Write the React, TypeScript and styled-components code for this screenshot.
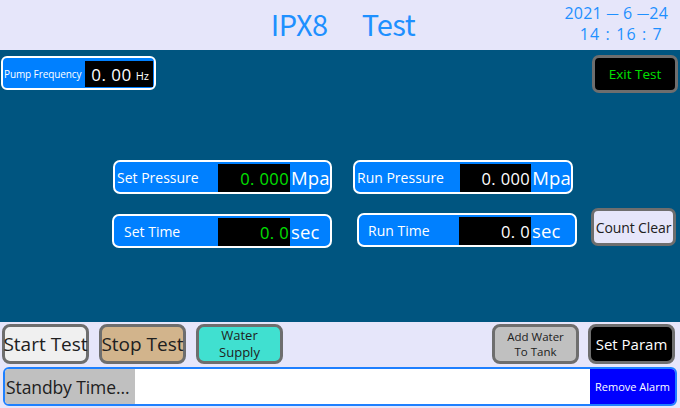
import React from "react";
import styled, { createGlobalStyle } from "styled-components";

const Global = createGlobalStyle`
  html, body { margin: 0; padding: 0; }
  body { width: 680px; height: 408px; overflow: hidden; font-family: "Open Sans", "Noto Sans", sans-serif; }
  * { box-sizing: border-box; }
`;

const Screen = styled.div`
  width: 680px;
  height: 408px;
  display: flex;
  flex-direction: column;
  background: #e6e6fa;
`;

const Header = styled.div`
  height: 50px;
  display: flex;
  align-items: center;
  position: relative;
  background: #e6e6fa;
`;

const Title = styled.div`
  flex: 1;
  display: flex;
  justify-content: center;
  gap: 34px;
  padding-left: 6px;
  color: #1e90ff;
  font-family: "Noto Sans CJK TC", "Open Sans", sans-serif;
  font-size: 29px;
  line-height: 34px;
  letter-spacing: -0.4px;
  margin-top: -5px;
`;

const Clock = styled.div`
  position: absolute;
  right: 12px;
  top: 3px;
  display: flex;
  flex-direction: column;
  align-items: flex-end;
  color: #1e90ff;
  font-size: 16px;
  line-height: 20px;
`;

const ClockLine = styled.span<{ $ls: number }>`
  letter-spacing: ${(p) => p.$ls}px;
  white-space: pre;
`;

const Dash = styled.span`
  font-size: 12.5px;
  letter-spacing: 0;
  vertical-align: 1px;
`;

const Panel = styled.div`
  height: 272px;
  background: #005580;
  display: flex;
  flex-direction: column;
`;

const TopRow = styled.div`
  display: flex;
  justify-content: space-between;
  align-items: flex-start;
  padding: 5px 2px 0 1px;
  height: 43px;
`;

const PumpBox = styled.div`
  margin-top: 1px;
  width: 155px;
  height: 34px;
  border: 2px solid #ffffff;
  border-radius: 6px;
  background: #0080ff;
  display: flex;
  align-items: center;
  padding: 3px 1px 1px 1px;
`;

const PumpLabel = styled.span`
  color: #ffffff;
  font-size: 10px;
  width: 82px;
  white-space: nowrap;
  letter-spacing: -0.1px;
`;

const PumpValue = styled.div`
  width: 69px;
  height: 26px;
  background: #000000;
  display: flex;
  align-items: center;
  justify-content: flex-end;
  gap: 4px;
  padding-right: 4px;
  color: #ffffff;
`;

const PumpNum = styled.span`
  font-size: 17px;
  letter-spacing: 0.5px;
`;

const PumpUnit = styled.span`
  font-size: 11px;
  margin-top: 3px;
`;

const ExitButton = styled.div`
  width: 86px;
  height: 38px;
  background: #000000;
  border: 3px solid #6e6e6e;
  border-radius: 7px;
  color: #00e000;
  font-size: 13.5px;
  display: flex;
  align-items: center;
  justify-content: center;
`;

const FieldRow = styled.div<{ $top: number; $pad: number }>`
  display: flex;
  align-items: flex-start;
  margin-top: ${(p) => p.$top}px;
  padding-left: ${(p) => p.$pad}px;
`;

const Field = styled.div<{ $w: number; $ml: number; $mt: number }>`
  width: ${(p) => p.$w}px;
  height: 34px;
  margin-left: ${(p) => p.$ml}px;
  margin-top: ${(p) => p.$mt}px;
  border: 2px solid #ffffff;
  border-radius: 7px;
  background: #0080ff;
  display: flex;
  align-items: center;
`;

const FieldLabel = styled.span<{ $w: number; $indent: number }>`
  width: ${(p) => p.$w}px;
  padding-left: ${(p) => p.$indent}px;
  color: #ffffff;
  font-size: 14px;
  white-space: nowrap;
`;

const ValueBox = styled.div<{ $green: boolean }>`
  width: 72px;
  height: 28px;
  margin-top: 2px;
  background: #000000;
  color: ${(p) => (p.$green ? "#00e000" : "#ffffff")};
  font-size: 16.5px;
  letter-spacing: 0.4px;
  display: flex;
  align-items: center;
  justify-content: flex-end;
  padding-right: 1px;
`;

const Unit = styled.span`
  color: #ffffff;
  font-size: 18.5px;
  padding-left: 1px;
  letter-spacing: 0.2px;
`;

const ClearButton = styled.div`
  width: 85px;
  height: 38px;
  margin-left: 14px;
  background: #e6e6fa;
  border: 3px solid #6e6e6e;
  border-radius: 7px;
  color: #202020;
  font-size: 14px;
  display: flex;
  align-items: center;
  justify-content: center;
  white-space: nowrap;
  letter-spacing: -0.1px;
`;

const Footer = styled.div`
  flex: 1;
  display: flex;
  flex-direction: column;
  padding: 2px 3px 2px 2px;
  gap: 3px;
`;

const ButtonRow = styled.div`
  display: flex;
  height: 40px;
  padding-right: 2px;
`;

const Spacer = styled.div`
  flex: 1;
`;

const Btn = styled.div<{ $bg: string; $fg: string; $size: number; $ml: number; $lh: number }>`
  width: 87px;
  height: 40px;
  margin-left: ${(p) => p.$ml}px;
  background: ${(p) => p.$bg};
  color: ${(p) => p.$fg};
  font-size: ${(p) => p.$size}px;
  line-height: ${(p) => p.$lh}px;
  border: 3px solid #6e6e6e;
  border-radius: 8px;
  display: flex;
  flex-direction: column;
  align-items: center;
  justify-content: center;
  text-align: center;
  white-space: nowrap;
`;

const BtnLine = styled.span`
  display: block;
`;

const StatusBar = styled.div`
  height: 39px;
  margin-left: 1px;
  border: 2px solid #1e80ff;
  border-radius: 6px;
  display: flex;
  overflow: hidden;
  background: #ffffff;
`;

const StatusText = styled.div`
  width: 130px;
  background: #c0c0c0;
  color: #202020;
  font-size: 17.5px;
  display: flex;
  align-items: center;
  padding-left: 1px;
  white-space: nowrap;
  letter-spacing: -0.1px;
`;

const RemoveAlarm = styled.div`
  width: 85px;
  margin-left: auto;
  background: #0000ff;
  color: #ffffff;
  font-size: 11px;
  display: flex;
  align-items: center;
  justify-content: center;
  white-space: nowrap;
`;

export default function App() {
  return (
    <>
      <Global />
      <Screen>
        <Header>
          <Title>
            <span>IPX8</span>
            <span>Test</span>
          </Title>
          <Clock>
            <ClockLine $ls={0.2}>
              {"2021 "}
              <Dash>—</Dash>
              {" 6 "}
              <Dash>—</Dash>
              {"24"}
            </ClockLine>
            <ClockLine $ls={1.1}>{"14 : 16 : 7 "}</ClockLine>
          </Clock>
        </Header>
        <Panel>
          <TopRow>
            <PumpBox>
              <PumpLabel>Pump Frequency</PumpLabel>
              <PumpValue>
                <PumpNum>0. 00</PumpNum>
                <PumpUnit>Hz</PumpUnit>
              </PumpValue>
            </PumpBox>
            <ExitButton>Exit Test</ExitButton>
          </TopRow>
          <FieldRow $top={67} $pad={113}>
            <Field $w={219} $ml={0} $mt={0}>
              <FieldLabel $w={103} $indent={2}>Set Pressure</FieldLabel>
              <ValueBox $green>0. 000</ValueBox>
              <Unit>Mpa</Unit>
            </Field>
            <Field $w={220} $ml={21} $mt={0}>
              <FieldLabel $w={105} $indent={2}>Run Pressure</FieldLabel>
              <ValueBox $green={false}>0. 000</ValueBox>
              <Unit>Mpa</Unit>
            </Field>
          </FieldRow>
          <FieldRow $top={14} $pad={112}>
            <Field $w={220} $ml={0} $mt={6}>
              <FieldLabel $w={104} $indent={10}>Set Time</FieldLabel>
              <ValueBox $green>0. 0</ValueBox>
              <Unit>sec</Unit>
            </Field>
            <Field $w={220} $ml={25} $mt={5}>
              <FieldLabel $w={100} $indent={9}>Run Time</FieldLabel>
              <ValueBox $green={false}>0. 0</ValueBox>
              <Unit>sec</Unit>
            </Field>
            <ClearButton>Count Clear</ClearButton>
          </FieldRow>
        </Panel>
        <Footer>
          <ButtonRow>
            <Btn $bg="#f0f0f0" $fg="#202020" $size={19} $ml={0} $lh={26}>Start Test</Btn>
            <Btn $bg="#d2b48c" $fg="#202020" $size={19} $ml={10} $lh={26}>Stop Test</Btn>
            <Btn $bg="#40e0d0" $fg="#202020" $size={13} $ml={10} $lh={17}>
              <BtnLine>Water</BtnLine>
              <BtnLine>Supply</BtnLine>
            </Btn>
            <Spacer />
            <Btn $bg="#c0c0c0" $fg="#202020" $size={11.5} $ml={0} $lh={15}>
              <BtnLine>Add Water</BtnLine>
              <BtnLine>To Tank</BtnLine>
            </Btn>
            <Btn $bg="#000000" $fg="#ffffff" $size={15} $ml={9} $lh={20}>Set Param</Btn>
          </ButtonRow>
          <StatusBar>
            <StatusText>Standby Time...</StatusText>
            <RemoveAlarm>Remove Alarm</RemoveAlarm>
          </StatusBar>
        </Footer>
      </Screen>
    </>
  );
}
